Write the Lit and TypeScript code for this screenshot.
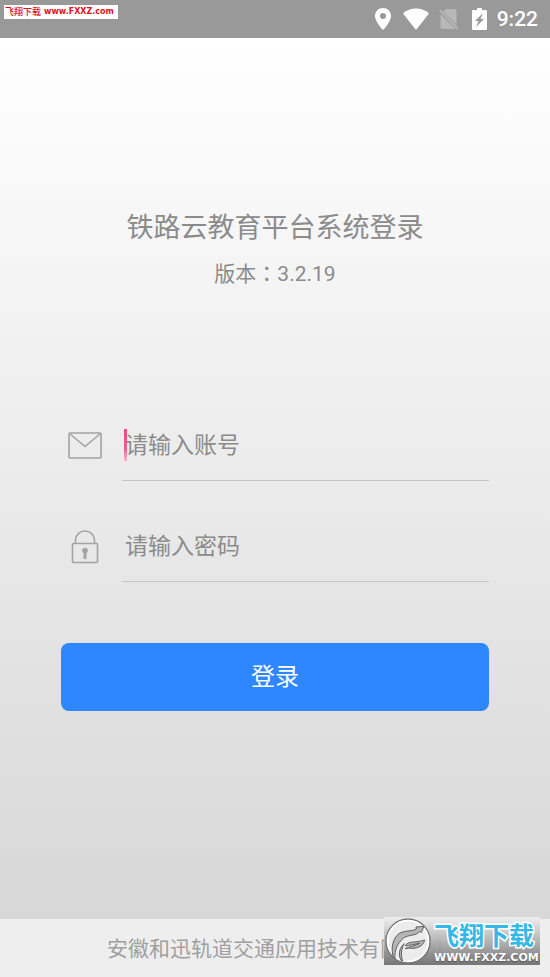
import { LitElement, html, css, svg } from "lit";
import { customElement } from "lit/decorators.js";

@customElement("status-bar")
class StatusBar extends LitElement {
  static styles = css`
    :host {
      display: flex;
      align-items: center;
      justify-content: space-between;
      height: 38px;
      padding: 0 12px 0 4px;
      background: #999;
      color: #fff;
    }
    .source {
      display: flex;
      align-items: center;
      gap: 3px;
      align-self: flex-start;
      box-sizing: border-box;
      height: 14px;
      margin-top: 5px;
      padding: 0 4px 0 1px;
      background: #fff;
      color: #e0101c;
      font: 500 9px/14px "Noto Sans CJK SC", sans-serif;
      text-decoration: none;
    }
    .domain {
      font: 700 8px/14px "DejaVu Sans", sans-serif;
    }
    .icons {
      display: flex;
      align-items: center;
    }
    .pin {
      margin-right: 12px;
    }
    .wifi,
    .sim {
      margin-right: 10px;
    }
    .battery {
      margin: 0 10px 0 4px;
    }
    svg {
      display: block;
      fill: currentColor;
    }
    .sim {
      fill: #b7b7b7;
    }
    .time {
      font: 500 21px/24px Roboto, sans-serif;
    }
  `;

  render() {
    return html`
      <a class="source" href="#">飞翔下载 <span class="domain">www.FXXZ.com</span></a>
      <div class="icons">
        <svg class="pin" width="16" height="22" viewBox="0 0 16 22" aria-hidden="true">
          <path fill-rule="evenodd" d="M8 0C3.600 0 0 3.500 0 8c0 6 8 14 8 14s8-8 8-14c0-4.500-3.600-8-8-8zm0 5a3 3 0 1 1 0 6 3 3 0 0 1 0-6z" />
        </svg>
        <svg class="wifi" width="26" height="22" viewBox="0 0 26 22" aria-hidden="true">
          <path d="M13 22 0 5.500C3.500 2 8 .500 13 .500S22.500 2 26 5.500z" />
        </svg>
        <svg class="sim" width="19" height="22" viewBox="0 0 19 22" aria-hidden="true">
          <path d="M7 1h9q1.500 0 1.500 1.500V16.500L4 3.200zM1.500 6 16 20.500q-.5.500-1 .5H3q-1.500 0-1.500-1.500z" />
          <path d="M0 2.500 1.300 1.200 19 19.500l-1.300 1.800z" />
        </svg>
        <svg class="battery" width="15" height="22" viewBox="0 0 15 22" aria-hidden="true">
          <path fill-rule="evenodd" d="M5 0h5v2h4q1 0 1 1v18q0 1-1 1H1q-1 0-1-1V3q0-1 1-1h4zM11 5 3 13h3.500L4 19l8-8H8.500z" />
        </svg>
        <span class="time">9:22</span>
      </div>
    `;
  }
}

@customElement("site-mark")
class SiteMark extends LitElement {
  static styles = css`
    :host {
      display: flex;
      align-items: center;
      gap: 3px;
      box-sizing: border-box;
      width: 156px;
      height: 48px;
      padding-left: 1px;
      overflow: hidden;
      background: linear-gradient(rgba(240, 240, 240, 0.9), rgba(176, 176, 176, 0.92) 50%, rgba(112, 112, 112, 0.96));
    }
    svg {
      flex: none;
      display: block;
    }
    .words {
      display: flex;
      flex-direction: column;
      white-space: nowrap;
    }
    .name {
      color: #35b8e8;
      font: 700 25px/34px "Noto Sans CJK SC", sans-serif;
      -webkit-text-stroke: 3px #fff;
      paint-order: stroke fill;
    }
    .domain {
      color: #fff;
      font: 700 11px/14px "DejaVu Sans", sans-serif;
      text-shadow: 0 1px 1px #555;
    }
  `;

  render() {
    return html`
      <svg width="46" height="46" viewBox="0 0 138 138" aria-hidden="true">
        <circle cx="69" cy="69" r="66" fill="#ececec" stroke="#777" stroke-width="4" />
        <circle cx="69" cy="69" r="61" fill="none" stroke="#fff" stroke-width="5" />
        <g fill="#b5b5b5" stroke="#606060" stroke-width="3" stroke-linejoin="round">
          <path d="M25 118C17 92 23 60 42 47C58 36 82 41 94 33L93 27L117 25L109 43L103 41C92 55 70 49 56 60C36 76 28 98 30 121Z" />
          <path d="M61 84C68 67 92 76 119 66C115 86 92 94 72 90L60 92C76 86 92 82 104 76C90 80 76 80 61 84Z" />
          <path d="M47 126C39 106 44 88 58 77C48 94 47 110 53 129Z" />
        </g>
      </svg>
      <div class="words">
        <span class="name">飞翔下载</span>
        <span class="domain">WWW.FXXZ.COM</span>
      </div>
    `;
  }
}

const mailIcon = svg`
  <svg width="34" height="28" viewBox="0 0 34 28" aria-hidden="true">
    <rect x="1" y="1" width="32" height="25" rx="1" />
    <path d="M2 2 17 14.500 32 2" />
  </svg>`;

const lockIcon = svg`
  <svg width="28" height="34" viewBox="0 0 28 34" aria-hidden="true">
    <rect x="1.500" y="13.500" width="25" height="19" rx="1" />
    <path d="M4.500 13V10a9.500 9 0 0 1 19 0v3" />
    <circle cx="14" cy="20.500" r="2" class="solid" />
    <path d="M14 22v7" class="key" />
  </svg>`;

@customElement("app-root")
class AppRoot extends LitElement {
  static styles = css`
    :host {
      display: flex;
      flex-direction: column;
      min-height: 100vh;
      color: #8b8b8b;
      font-family: Roboto, "Noto Sans CJK SC", sans-serif;
      background: linear-gradient(#fff 38px, #d7d7d7 calc(100% - 58px));
    }
    main {
      flex: 1;
      padding: 170px 61px 40px;
    }
    h1 {
      margin: 0 0 10px;
      font-size: 27px;
      font-weight: 400;
      line-height: 40px;
      text-align: center;
    }
    .version {
      margin: 0;
      font-size: 21px;
      line-height: 32px;
      text-align: center;
    }
    .colon {
      font-family: "Noto Sans CJK TC", sans-serif;
      line-height: 1;
    }
    form {
      display: flex;
      flex-direction: column;
      gap: 30px;
      margin-top: 120px;
    }
    .row {
      display: grid;
      grid-template-columns: 48px 1fr;
      column-gap: 13px;
      align-items: center;
    }
    label {
      display: flex;
      justify-content: center;
    }
    label svg {
      fill: none;
      stroke: #a3a3a3;
      stroke-width: 1.6;
    }
    .solid {
      fill: #a3a3a3;
    }
    .key {
      stroke-width: 3;
    }
    .field {
      position: relative;
      border-bottom: 1px solid #c6c6c6;
    }
    input {
      display: block;
      box-sizing: border-box;
      width: 100%;
      height: 70px;
      padding: 0 3px;
      border: 0;
      outline: 0;
      background: none;
      color: #666;
      font: 400 23px/32px Roboto, "Noto Sans CJK SC", sans-serif;
    }
    input::placeholder {
      color: #8b8b8b;
      opacity: 1;
    }
    .caret {
      position: absolute;
      left: 2px;
      top: 19px;
      width: 3px;
      height: 32px;
      background: linear-gradient(#ec4a80, #e8608e 60%, #f3b4c8);
    }
    button {
      height: 68px;
      margin-top: 31px;
      border: 0;
      border-radius: 8px;
      background: #2e87ff;
      color: #fff;
      font: 400 24px/32px Roboto, "Noto Sans CJK SC", sans-serif;
    }
    footer {
      position: relative;
      height: 58px;
      background: #eee;
      color: #a0a0a0;
      font-size: 21px;
      line-height: 60px;
      text-align: center;
    }
    site-mark {
      position: absolute;
      right: 10px;
      bottom: 12px;
      line-height: normal;
      text-align: left;
    }
  `;

  render() {
    return html`
      <status-bar></status-bar>
      <main>
        <h1>铁路云教育平台系统登录</h1>
        <p class="version">版本<span class="colon" lang="zh-TW">：</span>3.2.19</p>
        <form @submit=${(e: Event) => e.preventDefault()}>
          <div class="row">
            <label for="account" aria-label="账号">${mailIcon}</label>
            <div class="field">
              <input id="account" type="text" placeholder="请输入账号" />
              <span class="caret"></span>
            </div>
          </div>
          <div class="row">
            <label for="password" aria-label="密码">${lockIcon}</label>
            <div class="field">
              <input id="password" type="password" placeholder="请输入密码" />
            </div>
          </div>
          <button type="submit">登录</button>
        </form>
      </main>
      <footer>
        安徽和迅轨道交通应用技术有限公司
        <site-mark></site-mark>
      </footer>
    `;
  }
}
